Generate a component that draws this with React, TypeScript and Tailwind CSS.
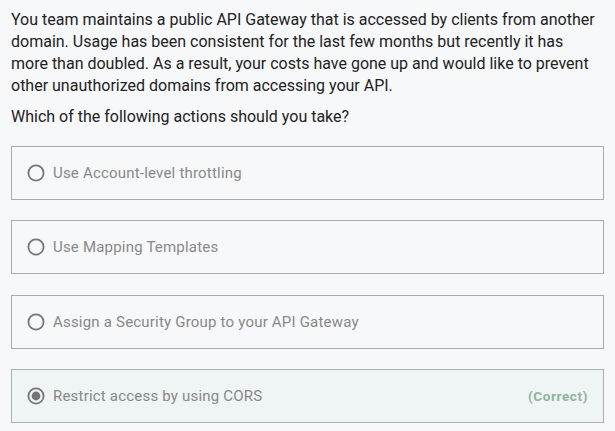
import React from 'react';

interface Option {
  label: string;
  selected?: boolean;
  correct?: boolean;
}

const options: Option[] = [
  { label: 'Use Account-level throttling' },
  { label: 'Use Mapping Templates' },
  { label: 'Assign a Security Group to your API Gateway' },
  { label: 'Restrict access by using CORS', selected: true, correct: true },
];

const Radio: React.FC<{ checked?: boolean }> = ({ checked }) => (
  <svg width="18" height="18" viewBox="0 0 18 18" className="shrink-0">
    <circle cx="9" cy="9" r="7.6" fill="none" stroke="#767676" strokeWidth="1.8" />
    {checked && <circle cx="9" cy="9" r="4.4" fill="#767676" />}
  </svg>
);

export default function App() {
  return (
    <div
      className="min-h-[431px] bg-[#f7f8fa] px-[11px] pt-[9px] text-[#222]"
      style={{ fontFamily: 'Roboto, "Noto Sans", sans-serif' }}
    >
      <p className="text-[16px] leading-[22px]">
        You team maintains a public API Gateway that is accessed by clients from another domain. Usage has been
        consistent for the last few months but recently it has more than doubled. As a result, your costs have gone
        up and would like to prevent other unauthorized domains from accessing your API.
      </p>
      <p className="mt-[9px] text-[16px] leading-[22px]">Which of the following actions should you take?</p>

      <div className="mt-[18px] flex flex-col gap-[20.4px]">
        {options.map((o) => (
          <div
            key={o.label}
            className={
              o.correct
                ? 'flex h-[54px] items-center border border-[#a9b1b1] bg-[#eff4f4] pl-[15px] pr-[15px]'
                : 'flex h-[54px] items-center border border-[#ababab] pl-[15px] pr-[15px]'
            }
          >
            <Radio checked={o.selected} />
            <span className="ml-[8px] text-[15px] text-[#888] tracking-[0.2px]">{o.label}</span>
            {o.correct && (
              <span className="ml-auto text-[13.5px] font-bold tracking-[0.6px] text-[#8fb4a1]">(Correct)</span>
            )}
          </div>
        ))}
      </div>
    </div>
  );
}
